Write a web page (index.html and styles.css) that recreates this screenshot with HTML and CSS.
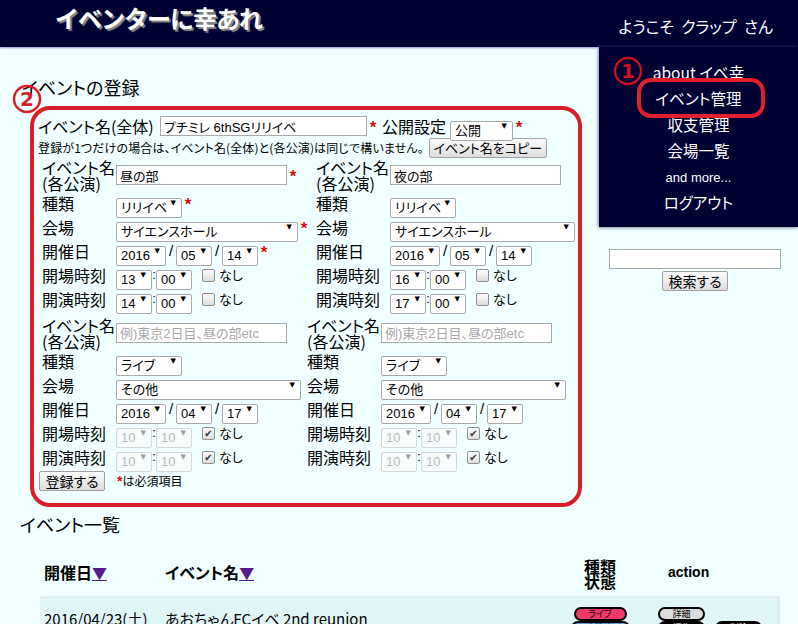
FILE: index.html
```html
<!DOCTYPE html>
<html lang="ja">
<head>
<meta charset="utf-8">
<title>イベンターに幸あれ</title>
<link rel="stylesheet" href="styles.css">
</head>
<body>
<header class="site-header">
  <h1 class="site-title">イベンターに幸あれ</h1>
  <div class="welcome">ようこそ&nbsp;&nbsp;クラップ&nbsp;&nbsp;さん</div>
</header>
<div class="top">
  <main class="main">
    <h2 class="sec-title">イベントの登録</h2>
    <svg class="mark mark-2" viewBox="0 0 30 30" width="30" height="30"><circle cx="15" cy="15" r="13" fill="none" stroke="#d81e28" stroke-width="2.5"/><text x="15" y="22" text-anchor="middle" class="mark-num">2</text></svg>
    <form class="regbox">
      <div class="row-all">
        <span class="lbl-all">イベント名(全体)</span>
        <input class="txt txt-all" value="プチミレ 6thSGリリイベ">
        <span class="req">*</span>
        <span class="lbl-pub">公開設定</span>
        <span class="sel w-pub"><select><option>公開</option></select></span>
        <span class="req">*</span>
      </div>
      <div class="row-note">
        <span class="note">登録が1つだけの場合は、イベント名(全体)と(各公演)は同じで構いません。</span>
        <button type="button" class="btn btn-copy">イベント名をコピー</button>
      </div>

      <div class="group g1">
        <div class="perf">
          <div class="lbl lbl-2">イベント名<br>(各公演)</div>
          <div class="ctl"><input class="txt txt-perf" value="昼の部"><span class="req">*</span></div>
          <div class="lbl">種類</div>
          <div class="ctl"><span class="sel w-kind"><select><option>リリイベ</option></select></span><span class="req">*</span></div>
          <div class="lbl">会場</div>
          <div class="ctl"><span class="sel w-hall"><select><option>サイエンスホール</option></select></span><span class="req">*</span></div>
          <div class="lbl">開催日</div>
          <div class="ctl"><span class="sel w-year"><select><option>2016</option></select></span><span class="sep">/</span><span class="sel w-num"><select><option>05</option></select></span><span class="sep">/</span><span class="sel w-num"><select><option>14</option></select></span><span class="req">*</span></div>
          <div class="lbl">開場時刻</div>
          <div class="ctl"><span class="sel w-num"><select><option>13</option></select></span><span class="colon">:</span><span class="sel w-num"><select><option>00</option></select></span><span class="cb"></span><span class="nashi">なし</span></div>
          <div class="lbl">開演時刻</div>
          <div class="ctl"><span class="sel w-num"><select><option>14</option></select></span><span class="colon">:</span><span class="sel w-num"><select><option>00</option></select></span><span class="cb"></span><span class="nashi">なし</span></div>
        </div>
        <div class="perf">
          <div class="lbl lbl-2">イベント名<br>(各公演)</div>
          <div class="ctl"><input class="txt txt-perf" value="夜の部"></div>
          <div class="lbl">種類</div>
          <div class="ctl"><span class="sel w-kind"><select><option>リリイベ</option></select></span></div>
          <div class="lbl">会場</div>
          <div class="ctl"><span class="sel w-hall2"><select><option>サイエンスホール</option></select></span></div>
          <div class="lbl">開催日</div>
          <div class="ctl"><span class="sel w-year"><select><option>2016</option></select></span><span class="sep">/</span><span class="sel w-num"><select><option>05</option></select></span><span class="sep">/</span><span class="sel w-num"><select><option>14</option></select></span></div>
          <div class="lbl">開場時刻</div>
          <div class="ctl"><span class="sel w-num"><select><option>16</option></select></span><span class="colon">:</span><span class="sel w-num"><select><option>00</option></select></span><span class="cb"></span><span class="nashi">なし</span></div>
          <div class="lbl">開演時刻</div>
          <div class="ctl"><span class="sel w-num"><select><option>17</option></select></span><span class="colon">:</span><span class="sel w-num"><select><option>00</option></select></span><span class="cb"></span><span class="nashi">なし</span></div>
        </div>
      </div>

      <div class="group g2">
        <div class="perf">
          <div class="lbl lbl-2">イベント名<br>(各公演)</div>
          <div class="ctl"><input class="txt txt-perf" placeholder="例)東京2日目、昼の部etc"></div>
          <div class="lbl">種類</div>
          <div class="ctl"><span class="sel w-kind"><select><option>ライブ</option></select></span></div>
          <div class="lbl">会場</div>
          <div class="ctl"><span class="sel w-hall2"><select><option>その他</option></select></span></div>
          <div class="lbl">開催日</div>
          <div class="ctl"><span class="sel w-year"><select><option>2016</option></select></span><span class="sep">/</span><span class="sel w-num"><select><option>04</option></select></span><span class="sep">/</span><span class="sel w-num"><select><option>17</option></select></span></div>
          <div class="lbl">開場時刻</div>
          <div class="ctl"><span class="sel w-num dis"><select disabled><option>10</option></select></span><span class="colon">:</span><span class="sel w-num dis"><select disabled><option>10</option></select></span><span class="cb on">✔</span><span class="nashi">なし</span></div>
          <div class="lbl">開演時刻</div>
          <div class="ctl"><span class="sel w-num dis"><select disabled><option>10</option></select></span><span class="colon">:</span><span class="sel w-num dis"><select disabled><option>10</option></select></span><span class="cb on">✔</span><span class="nashi">なし</span></div>
        </div>
        <div class="perf">
          <div class="lbl lbl-2">イベント名<br>(各公演)</div>
          <div class="ctl"><input class="txt txt-perf" placeholder="例)東京2日目、昼の部etc"></div>
          <div class="lbl">種類</div>
          <div class="ctl"><span class="sel w-kind"><select><option>ライブ</option></select></span></div>
          <div class="lbl">会場</div>
          <div class="ctl"><span class="sel w-hall2"><select><option>その他</option></select></span></div>
          <div class="lbl">開催日</div>
          <div class="ctl"><span class="sel w-year"><select><option>2016</option></select></span><span class="sep">/</span><span class="sel w-num"><select><option>04</option></select></span><span class="sep">/</span><span class="sel w-num"><select><option>17</option></select></span></div>
          <div class="lbl">開場時刻</div>
          <div class="ctl"><span class="sel w-num dis"><select disabled><option>10</option></select></span><span class="colon">:</span><span class="sel w-num dis"><select disabled><option>10</option></select></span><span class="cb on">✔</span><span class="nashi">なし</span></div>
          <div class="lbl">開演時刻</div>
          <div class="ctl"><span class="sel w-num dis"><select disabled><option>10</option></select></span><span class="colon">:</span><span class="sel w-num dis"><select disabled><option>10</option></select></span><span class="cb on">✔</span><span class="nashi">なし</span></div>
        </div>
      </div>

      <div class="row-submit">
        <button type="button" class="btn btn-submit">登録する</button>
        <span class="must"><span class="req-s">*</span>は必須項目</span>
      </div>
    </form>
  </main>
  <aside class="side">
    <nav class="menu">
      <a class="menu-item">about イベ幸</a>
      <a class="menu-item">イベント管理</a>
      <a class="menu-item">収支管理</a>
      <a class="menu-item">会場一覧</a>
      <a class="menu-item small">and more...</a>
      <a class="menu-item">ログアウト</a>
    </nav>
    <svg class="mark mark-1" viewBox="0 0 30 30" width="30" height="30"><circle cx="15" cy="15" r="13" fill="none" stroke="#c8101c" stroke-width="2.5"/><text x="15" y="22" text-anchor="middle" class="mark-num">1</text></svg>
    <div class="hl-box"></div>
    <div class="search">
      <input class="txt txt-search">
      <button type="button" class="btn btn-search">検索する</button>
    </div>
  </aside>
</div>

<section class="list">
  <h2 class="list-title">イベント一覧</h2>
  <div class="ltable">
    <div class="lhead">
      <div class="h-date">開催日<a class="sort">▼</a></div>
      <div class="h-name">イベント名<a class="sort">▼</a></div>
      <div class="h-type">種類<br>状態</div>
      <div class="h-act">action</div>
    </div>
    <div class="lrow">
      <div class="c-date">2016/04/23(土)</div>
      <div class="c-name">あおちゃんFCイベ 2nd reunion</div>
      <div class="c-type"><span class="pill pill-live">ライブ</span><span class="pill pill-apply">申込中</span></div>
      <div class="c-act"><span class="pill pill-detail">詳細</span><div class="act2"><span class="pill pill-black">編集</span><span class="pill pill-black">削除</span></div></div>
    </div>
  </div>
</section>
</body>
</html>
```

FILE: styles.css
```css
* { box-sizing: border-box; }
html, body { margin: 0; padding: 0; }
body {
  background: #f0ffff;
  font-family: "Noto Sans CJK JP", sans-serif;
  font-feature-settings: "palt";
  color: #000;
  width: 798px;
  height: 624px;
  overflow: hidden;
}

/* header */
.site-header {
  height: 47px;
  background: #000033;
  display: flex;
  justify-content: space-between;
  align-items: flex-start;
  box-shadow: 0 1px 2px #8c8cc8;
  position: relative;
  z-index: 1;
}
.site-title {
  margin: 0;
  padding: 4px 0 0 55px;
  font-size: 24px;
  line-height: 28px;
  font-weight: bold;
  color: #fff;
  font-feature-settings: normal;
  letter-spacing: -1px;
  text-shadow: 2px 2px 1px #8a8a8a;
}
.welcome {
  padding: 16px 25px 0 0;
  font-size: 16px;
  line-height: 20px;
  color: #fff;
}

/* top area */
.top { display: flex; }
.main { width: 599px; position: relative; }
.side { width: 199px; position: relative; z-index: 2; }

.sec-title {
  margin: 29px 0 0 22px;
  font-size: 18px;
  line-height: 22px;
  font-weight: normal;
}
.mark { position: absolute; }
.mark-num {
  font-family: "DejaVu Sans", sans-serif;
  font-weight: bold;
  font-size: 20px;
  fill: #d81e28;
}
.mark-2 { left: 12px; top: 37px; }
.mark-1 { left: 14px; top: 9px; }
.mark-1 .mark-num { fill: #d0121e; }

.regbox {
  margin: 8px 0 6px 30px;
  width: 552px;
  border: 4px solid #d81e28;
  border-radius: 20px;
  padding: 6px 0 12px 4px;
}

.row-all {
  display: flex;
  align-items: center;
  height: 20px;
}
.lbl-all { width: 122px; font-size: 16px; line-height: 20px; }
.lbl-pub { width: 68px; margin-left: 3px; font-size: 16px; line-height: 20px; }

.req, .req-s {
  color: #cc1010;
  font-family: "Liberation Sans", sans-serif;
  font-weight: bold;
  font-size: 17px;
  line-height: 20px;
  width: 12px;
  text-align: center;
  padding-top: 3px;
}
.req-s { width: auto; padding: 0; font-size: 14px; }

.txt {
  height: 20px;
  border: 1px solid #a9a9a9;
  background: #fff;
  padding: 0 3px;
  font-family: "Liberation Sans", "Noto Sans CJK JP", sans-serif;
  font-feature-settings: "palt";
  font-size: 13px;
  color: #000;
  outline: none;
}
.txt::placeholder { color: #a8a8a8; }
.txt-all { width: 207px; }
.txt-perf { width: 171px; }

.row-note {
  display: flex;
  align-items: center;
  height: 20px;
  margin-top: 2px;
}
.note { font-size: 12px; line-height: 20px; letter-spacing: 0.13px; white-space: nowrap; }

.btn {
  height: 20px;
  border: 1px solid #a0a0a0;
  border-radius: 2px;
  background: linear-gradient(#fbfbfb, #dedede);
  font-family: "Noto Sans CJK JP", sans-serif;
  font-feature-settings: "palt";
  font-size: 13px;
  line-height: 16px;
  padding: 0;
  color: #000;
  white-space: nowrap;
  text-align: center;
}
.btn-copy { width: 118px; margin-left: 5px; }

/* performance groups */
.group { display: flex; padding-left: 4px; }
.g1 { margin-top: 1px; }
.g2 { margin-top: 6px; }
.perf {
  display: grid;
  grid-template-columns: 74px auto;
  grid-template-rows: 32px repeat(5, 24px);
  align-items: center;
}
.g1 .perf:first-child { width: 274px; }
.g2 .perf:first-child { width: 265px; }

.lbl { font-size: 16px; line-height: 20px; white-space: nowrap; }
.lbl-2 { line-height: 16px; }
.ctl { display: flex; align-items: center; height: 20px; }

.sel { position: relative; display: inline-block; height: 20px; }
.sel select {
  -webkit-appearance: none;
  appearance: none;
  width: 100%;
  height: 20px;
  border: 1px solid #a9a9a9;
  border-radius: 2px;
  background: #fff;
  padding: 0 14px 0 4px;
  font-family: "Liberation Sans", "Noto Sans CJK JP", sans-serif;
  font-feature-settings: "palt";
  font-size: 13px;
  color: #000;
  outline: none;
}
.sel::after {
  content: "▼";
  position: absolute;
  right: 6px;
  top: 4px;
  font-family: "DejaVu Sans", sans-serif;
  font-size: 7px;
  line-height: 12px;
  color: #000;
  pointer-events: none;
}
.sel.dis select { color: #a0a0a0; border-color: #c8c8c8; background: #fafafa; }
.sel.dis::after { color: #a0a0a0; }

.w-pub { width: 63px; }
.w-kind { width: 66px; }
.w-hall { width: 182px; }
.w-hall2 { width: 185px; }
.w-year { width: 50px; }
.w-num { width: 36px; }

.sep {
  width: 10px;
  text-align: center;
  font-family: "Liberation Sans", sans-serif;
  font-size: 15px;
  line-height: 20px;
}
.colon {
  width: 4px;
  text-align: center;
  font-family: "Liberation Sans", sans-serif;
  font-size: 13px;
  line-height: 20px;
}
.cb {
  width: 13px;
  height: 13px;
  margin-left: 10px;
  border: 1px solid #8f8f8f;
  border-radius: 2px;
  background: linear-gradient(#fdfdfd, #dcdcdc);
  font-family: "DejaVu Sans", sans-serif;
  font-size: 10px;
  line-height: 11px;
  text-align: center;
  color: #333;
}
.nashi { margin-left: 4px; font-size: 13px; line-height: 20px; }

.row-submit {
  display: flex;
  align-items: center;
  height: 20px;
  margin-top: 2px;
  padding-left: 1px;
}
.btn-submit { width: 66px; font-size: 14px; }
.must { margin-left: 12px; font-size: 12px; line-height: 20px; }

/* sidebar */
.menu {
  display: flex;
  flex-direction: column;
  align-items: center;
  background: #000033;
  padding: 12px 0;
  box-shadow: -1px 1px 3px #8a8a9a;
}
.menu-item {
  color: #fff;
  font-size: 15.5px;
  line-height: 26px;
}
.menu-item.small { font-size: 13px; font-family: "Liberation Sans", sans-serif; line-height: 26px; padding-top: 2px; margin-bottom: -2px; }
.hl-box {
  position: absolute;
  left: 38px;
  top: 31px;
  width: 128px;
  height: 40px;
  border: 4px solid #e0202c;
  border-radius: 14px;
}
.search {
  display: flex;
  flex-direction: column;
  align-items: center;
  padding: 22px 7px 0 0;
  gap: 2px;
}
.txt-search { width: 172px; }
.btn-search { width: 66px; font-size: 14px; }

/* list */
.list-title {
  margin: 0 0 0 20px;
  font-size: 18px;
  line-height: 22px;
  font-weight: normal;
}
.ltable { margin: 16px 0 0 40px; width: 738px; }
.lhead, .lrow {
  display: grid;
  grid-template-columns: 125px 405px 60px 1fr;
}
.lhead { height: 46px; align-items: center; font-weight: bold; font-size: 16px; }
.h-date { padding-left: 4px; padding-bottom: 4px; }
.h-name { padding-bottom: 4px; }
.sort { color: #551a8b; text-decoration: underline; font-size: 15px; }
.h-type { text-align: center; line-height: 15.5px; }
.h-act { padding-left: 38px; padding-bottom: 4px; font-family: "Liberation Sans", sans-serif; font-size: 14px; }
.lrow {
  background: #e0f6f6;
  border-top: 1px solid #d0ecec;
  box-shadow: 1px 0 2px #c8dcdc;
  height: 60px;
  padding-top: 9px;
  font-size: 15px;
}
.c-date { padding-left: 4px; line-height: 24px; }
.c-name { line-height: 24px; }
.c-type { display: flex; flex-direction: column; align-items: center; }
.c-act { padding-left: 28px; display: flex; flex-direction: column; align-items: flex-start; }
.act2 { display: flex; gap: 10px; }
.pill {
  display: inline-block;
  height: 14px;
  border: 2px solid #000;
  border-radius: 8px;
  font-size: 9px;
  line-height: 10px;
  text-align: center;
}
.pill-live { width: 53px; background: #ee3a68; }
.pill-apply { width: 59px; background: #5b9be0; }
.pill-detail { width: 47px; background: #dcdcdc; }
.pill-black { width: 47px; background: #000; color: #fff; }
```
